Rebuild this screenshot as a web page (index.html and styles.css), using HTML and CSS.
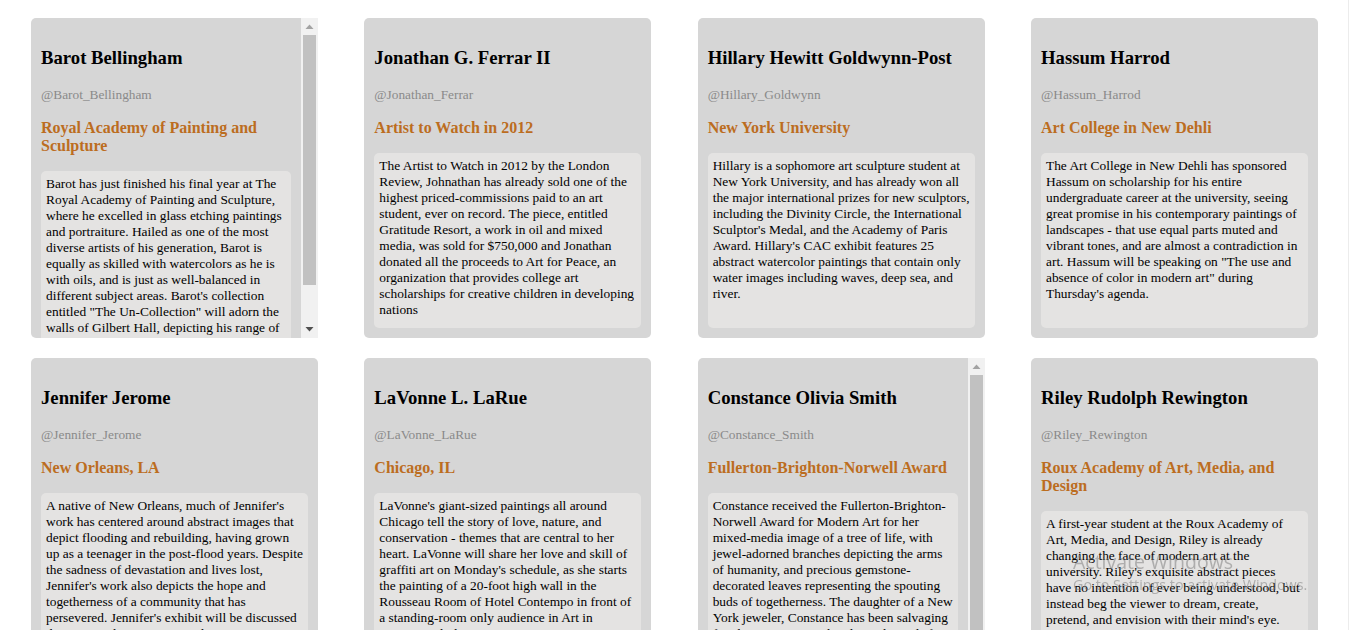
FILE: index.html
```html
<!DOCTYPE html>
<html lang="en">
<head>
<meta charset="utf-8">
<title>Artists</title>
<link rel="stylesheet" href="styles.css">
</head>
<body>
<main class="grid">
  <article class="card scrolls">
    <h3 class="name">Barot Bellingham</h3>
    <p class="handle">@Barot_Bellingham</p>
    <h4 class="org">Royal Academy of Painting and Sculpture</h4>
    <div class="bio">Barot has just finished his final year at The Royal Academy of Painting and Sculpture, where he excelled in glass etching paintings and portraiture. Hailed as one of the most diverse artists of his generation, Barot is equally as skilled with watercolors as he is with oils, and is just as well-balanced in different subject areas. Barot's collection entitled "The Un-Collection" will adorn the walls of Gilbert Hall, depicting his range of styles, from delicate glass etchings to bold abstract oils.</div>
    <div class="scrollbar" aria-hidden="true">
      <div class="sb-btn"><svg width="9" height="5" viewBox="0 0 9 5"><polygon points="0.5,5 4.5,0.5 8.5,5" fill="#a3a3a3"/></svg></div>
      <div class="sb-track"><div class="sb-thumb" style="height:250px"></div></div>
      <div class="sb-btn"><svg width="9" height="5" viewBox="0 0 9 5"><polygon points="0.5,0 8.5,0 4.5,4.5" fill="#505050"/></svg></div>
    </div>
  </article>
  <article class="card">
    <h3 class="name">Jonathan G. Ferrar II</h3>
    <p class="handle">@Jonathan_Ferrar</p>
    <h4 class="org">Artist to Watch in 2012</h4>
    <div class="bio">The Artist to Watch in 2012 by the London Review, Johnathan has already sold one of the highest priced-commissions paid to an art student, ever on record. The piece, entitled Gratitude Resort, a work in oil and mixed media, was sold for $750,000 and Jonathan donated all the proceeds to Art for Peace, an organization that provides college art scholarships for creative children in developing nations</div>
  </article>
  <article class="card">
    <h3 class="name">Hillary Hewitt Goldwynn-Post</h3>
    <p class="handle">@Hillary_Goldwynn</p>
    <h4 class="org">New York University</h4>
    <div class="bio">Hillary is a sophomore art sculpture student at New York University, and has already won all the major international prizes for new sculptors, including the Divinity Circle, the International Sculptor's Medal, and the Academy of Paris Award. Hillary's CAC exhibit features 25 abstract watercolor paintings that contain only water images including waves, deep sea, and river.</div>
  </article>
  <article class="card">
    <h3 class="name">Hassum Harrod</h3>
    <p class="handle">@Hassum_Harrod</p>
    <h4 class="org">Art College in New Dehli</h4>
    <div class="bio">The Art College in New Dehli has sponsored Hassum on scholarship for his entire undergraduate career at the university, seeing great promise in his contemporary paintings of landscapes - that use equal parts muted and vibrant tones, and are almost a contradiction in art. Hassum will be speaking on "The use and absence of color in modern art" during Thursday's agenda.</div>
  </article>
  <article class="card">
    <h3 class="name">Jennifer Jerome</h3>
    <p class="handle">@Jennifer_Jerome</p>
    <h4 class="org">New Orleans, LA</h4>
    <div class="bio">A native of New Orleans, much of Jennifer's work has centered around abstract images that depict flooding and rebuilding, having grown up as a teenager in the post-flood years. Despite the sadness of devastation and lives lost, Jennifer's work also depicts the hope and togetherness of a community that has persevered. Jennifer's exhibit will be discussed during Tuesday's Water Panel event.</div>
  </article>
  <article class="card">
    <h3 class="name">LaVonne L. LaRue</h3>
    <p class="handle">@LaVonne_LaRue</p>
    <h4 class="org">Chicago, IL</h4>
    <div class="bio">LaVonne's giant-sized paintings all around Chicago tell the story of love, nature, and conservation - themes that are central to her heart. LaVonne will share her love and skill of graffiti art on Monday's schedule, as she starts the painting of a 20-foot high wall in the Rousseau Room of Hotel Contempo in front of a standing-room only audience in Art in Unexpected Places.</div>
  </article>
  <article class="card scrolls">
    <h3 class="name">Constance Olivia Smith</h3>
    <p class="handle">@Constance_Smith</p>
    <h4 class="org">Fullerton-Brighton-Norwell Award</h4>
    <div class="bio">Constance received the Fullerton-Brighton-Norwell Award for Modern Art for her mixed-media image of a tree of life, with jewel-adorned branches depicting the arms of humanity, and precious gemstone-decorated leaves representing the spouting buds of togetherness. The daughter of a New York jeweler, Constance has been salvaging family gemstones and reclaimed metals for years, turning heirlooms into luminous art.</div>
    <div class="scrollbar" aria-hidden="true">
      <div class="sb-btn"><svg width="9" height="5" viewBox="0 0 9 5"><polygon points="0.5,5 4.5,0.5 8.5,5" fill="#a3a3a3"/></svg></div>
      <div class="sb-track"><div class="sb-thumb" style="height:262px"></div></div>
      <div class="sb-btn"><svg width="9" height="5" viewBox="0 0 9 5"><polygon points="0.5,0 8.5,0 4.5,4.5" fill="#505050"/></svg></div>
    </div>
  </article>
  <article class="card">
    <h3 class="name">Riley Rudolph Rewington</h3>
    <p class="handle">@Riley_Rewington</p>
    <h4 class="org">Roux Academy of Art, Media, and Design</h4>
    <div class="bio">A first-year student at the Roux Academy of Art, Media, and Design, Riley is already changing the face of modern art at the university. Riley's exquisite abstract pieces have no intention of ever being understood, but instead beg the viewer to dream, create, pretend, and envision with their mind's eye.</div>
  </article>
</main>
<div class="watermark">
  <div class="wm-title">Activate Windows</div>
  <div class="wm-sub">Go to Settings to activate Windows.</div>
</div>
</body>
</html>
```
FILE: styles.css
```css
html, body {
  margin: 0;
  padding: 0;
}

body {
  font-family: "Liberation Serif", "Times New Roman", serif;
  background: #fff;
  color: #000;
  border-right: 1px solid #ececec;
  width: 1348px;
}

.grid {
  display: grid;
  grid-template-columns: repeat(4, 287px);
  column-gap: 46.33px;
  row-gap: 20px;
  padding: 18px 0 0 31px;
}

.card {
  position: relative;
  box-sizing: border-box;
  height: 320px;
  background: #d6d6d6;
  border-radius: 5px;
  padding: 10px 10px;
  overflow: hidden;
  display: flex;
  flex-direction: column;
}

.card.scrolls {
  padding-right: 27px;
  border-radius: 5px 0 0 5px;
}

.scrollbar {
  position: absolute;
  top: 0;
  right: 0;
  width: 17px;
  height: 320px;
  background: #f1f1f1;
  display: flex;
  flex-direction: column;
}

.sb-btn {
  height: 17px;
  flex: none;
  display: flex;
  align-items: center;
  justify-content: center;
}

.sb-btn svg {
  display: block;
}

.sb-track {
  flex: 1;
  overflow: hidden;
}

.sb-thumb {
  margin: 0 2px;
  background: #c1c1c1;
}

.name {
  font-size: 18.72px;
  font-weight: bold;
  margin: 18.72px 0 0;
  flex: none;
}

.handle {
  font-size: 13.33px;
  color: #8a8a8a;
  margin: 18.2px 0 0;
  flex: none;
}

.org {
  font-size: 16px;
  line-height: 18px;
  font-weight: bold;
  color: #bc6d1f;
  margin: 16px 0 0;
  flex: none;
}

.bio {
  margin-top: 16px;
  background: #e4e3e2;
  border-radius: 5px;
  padding: 5px;
  font-size: 13.4px;
  line-height: 16px;
  flex: 1 0 auto;
}

.watermark {
  position: fixed;
  left: 1073px;
  top: 548px;
  font-family: "Open Sans", "Noto Sans", sans-serif;
  color: rgba(120, 120, 120, 0.5);
  pointer-events: none;
}

.wm-title {
  font-size: 19.5px;
  line-height: 28px;
}

.wm-sub {
  font-size: 14.3px;
  line-height: 18px;
}
```
